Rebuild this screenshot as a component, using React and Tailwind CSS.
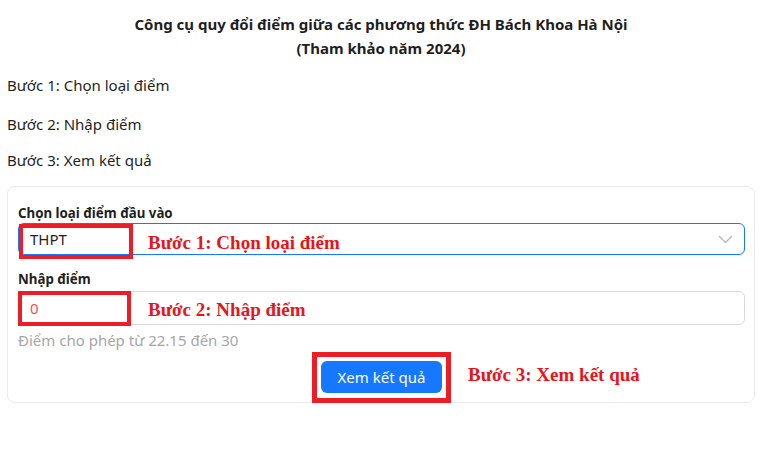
import { useState } from 'react';

const Note = ({ children, className = '' }) => (
  <span
    className={`absolute text-[19px] leading-[22px] font-bold text-[#e8141c] whitespace-nowrap ${className}`}
    style={{ fontFamily: '"Liberation Serif", serif' }}
  >
    {children}
  </span>
);

const App = () => {
  const [score, setScore] = useState('0');

  return (
    <div className="w-[762px] h-[470px] bg-white text-[#1f1f1f]" style={{ fontFamily: '"Noto Sans", sans-serif' }}>
      <div className="pt-[12px] text-center font-bold text-[15px] leading-[24px]">
        <div>Công cụ quy đổi điểm giữa các phương thức ĐH Bách Khoa Hà Nội</div>
        <div>(Tham khảo năm 2024)</div>
      </div>

      <div className="px-[7px] text-[15px] leading-[22px] mt-[14px]">
        <p>Bước 1: Chọn loại điểm</p>
        <p className="mt-[17px]">Bước 2: Nhập điểm</p>
        <p className="mt-[14px]">Bước 3: Xem kết quả</p>
      </div>

      <div className="mx-[7px] mt-[15px] border border-[#ebebeb] rounded-[8px] pl-[10px] pr-[9px] pt-[16px] pb-[9px]">
        <label className="block text-[13.3px] font-bold leading-[20px]">Chọn loại điểm đầu vào</label>
        <div className="relative">
          <div className="h-[32px] border border-[#1677ff] rounded-[6px] flex items-center justify-between pl-[11px] pr-[11px] text-[15px]">
            <span>THPT</span>
            <svg width="15" height="14" viewBox="0 0 15 14" fill="none" stroke="#b5b5b5" strokeWidth="1.3">
              <path d="M1 4l6.5 6.5 6.5-6.5" />
            </svg>
          </div>
          <div className="absolute left-[1px] top-[1px] w-[114px] h-[35px] border-[4px] border-[#ee1c24]" />
          <Note className="left-[130px] top-[9px]">Bước 1: Chọn loại điểm</Note>
        </div>

        <label className="block text-[13.3px] font-bold leading-[20px] mt-[14px]">Nhập điểm</label>
        <div className="relative mt-[2px]">
          <input
            value={score}
            onChange={(e) => setScore(e.target.value)}
            className="block w-full h-[34px] border border-[#d9d9d9] rounded-[6px] px-[11px] text-[15px] text-[#ff4d4f] outline-none"
          />
          <div className="absolute left-0 top-0 w-[113px] h-[35px] border-[4px] border-[#ee1c24]" />
          <Note className="left-[130px] top-[8px]">Bước 2: Nhập điểm</Note>
        </div>
        <div className="text-[15px] text-[#a6a6a6] leading-[20px] mt-[5px]">Điểm cho phép từ 22.15 đến 30</div>

        <div className="flex justify-center mt-[11px]">
          <div className="relative flex">
            <button className="w-[121px] h-[32px] bg-[#1677ff] text-white rounded-[6px] text-[15px]">Xem kết quả</button>
            <div className="absolute left-[-9px] top-[-9px] w-[139px] h-[51px] border-[5px] border-[#ee1c24]" />
            <Note className="left-[147px] top-[3px]">Bước 3: Xem kết quả</Note>
          </div>
        </div>
      </div>
    </div>
  );
};

export default App;
